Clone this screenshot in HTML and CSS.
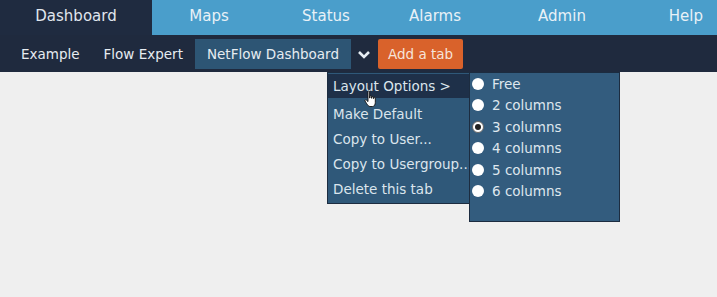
FILE: index.html
```html
<!DOCTYPE html>
<html>
<head>
<meta charset="utf-8">
<link rel="stylesheet" href="styles.css">
</head>
<body>
<div class="topnav">
  <div class="tab active">Dashboard</div>
  <div class="tab">Maps</div>
  <div class="tab">Status</div>
  <div class="tab">Alarms</div>
  <div class="tab">Admin</div>
  <div class="tab help">Help</div>
</div>
<div class="subnav">
  <div class="sub">Example</div>
  <div class="sub">Flow Expert</div>
  <div class="sub current">NetFlow Dashboard</div>
  <div class="chev"><svg width="14" height="10" viewBox="0 0 14 10"><path d="M2 2 L7 7 L12 2" fill="none" stroke="#e6edf3" stroke-width="2.6"/></svg></div>
  <div class="addtab">Add a tab</div>
</div>
<div class="content">
  <div class="menu">
    <div class="item hover">Layout Options &gt;</div>
    <div class="item">Make Default</div>
    <div class="item">Copy to User...</div>
    <div class="item">Copy to Usergroup...</div>
    <div class="item">Delete this tab</div>
    <svg class="cursor" width="14" height="18" viewBox="0 0 14 18"><path d="M4 1.5 C4 0.8 5.6 0.8 5.6 1.5 L5.6 8 L6 8 L6 6.3 C6 5.6 7.5 5.6 7.5 6.3 L7.5 8.2 L7.9 8.2 L7.9 7 C7.9 6.3 9.4 6.3 9.4 7 L9.4 8.6 L9.8 8.6 L9.8 7.8 C9.8 7.1 11.3 7.1 11.3 7.8 L11.3 12.5 C11.3 14.5 10.3 16.5 8.5 16.5 L6 16.5 C4.6 16.5 3.8 15.3 2.8 13.8 L1 11 C0.6 10.3 1.6 9.4 2.3 10 L4 11.6 Z" fill="#fff" stroke="#111" stroke-width="0.9"/></svg>
  </div>
  <div class="submenu">
    <label class="opt"><span class="radio"></span>Free</label>
    <label class="opt"><span class="radio"></span>2 columns</label>
    <label class="opt"><span class="radio checked"></span>3 columns</label>
    <label class="opt"><span class="radio"></span>4 columns</label>
    <label class="opt"><span class="radio"></span>5 columns</label>
    <label class="opt"><span class="radio"></span>6 columns</label>
  </div>
</div>
</body>
</html>
```
FILE: styles.css
```css
* { box-sizing: border-box; }
html, body { margin: 0; padding: 0; }
body {
  background: #efefef;
  font-family: "DejaVu Sans", Verdana, sans-serif;
  color: #e4ecf2;
  width: 717px;
  height: 297px;
  overflow: hidden;
}
.topnav {
  display: grid;
  grid-template-columns: 152px 114px 120px 98px 156px 1fr;
  height: 35px;
  background: #4a9ecb;
}
.tab {
  font-size: 15px;
  line-height: 33px;
  text-align: center;
  color: #e8f1f7;
}
.tab.active { background: #1f2b40; color: #e0e6ee; }
.tab.help { text-align: right; padding-right: 14px; }
.subnav {
  display: flex;
  align-items: center;
  height: 37px;
  background: #1f2a3e;
  padding-left: 9px;
}
.sub {
  font-size: 13.5px;
  padding: 0 12px;
  line-height: 30px;
  color: #e6ecf1;
}
.sub.current {
  background: #2d5574;
}
.chev {
  width: 27px;
  display: flex;
  justify-content: center;
  padding-top: 2px;
}
.addtab {
  background: #d9622b;
  color: #f6e4da;
  font-size: 13.5px;
  height: 30px;
  line-height: 30px;
  padding: 0 10px;
  border-radius: 2px;
}
.content {
  position: relative;
  height: 225px;
}
.menu {
  position: absolute;
  left: 327px;
  top: 0;
  width: 143px;
  height: 132px;
  background: #2f5879;
  border: 1px solid #1c2c40;
  padding-top: 1px;
}
.item {
  font-size: 13.5px;
  height: 25px;
  line-height: 24px;
  padding-left: 5px;
  white-space: nowrap;
  overflow: hidden;
  color: #dbe5ed;
}
.item.hover { background: #1e3049; height: 24px; line-height: 24px; margin-bottom: 4px; }
.cursor { position: absolute; left: 36px; top: 17px; }
.submenu {
  position: absolute;
  left: 469px;
  top: 0;
  width: 151px;
  height: 150px;
  background: #335c7e;
  border: 1px solid #1c2c40;
  padding-top: 0;
}
.opt {
  display: flex;
  align-items: center;
  height: 21.5px;
  font-size: 13.5px;
  color: #dfe7ee;
  padding-left: 2px;
}
.radio {
  width: 12px;
  height: 12px;
  border-radius: 50%;
  background: #fff;
  margin-right: 8px;
  position: relative;
}
.radio.checked { border: 1px solid #666; }
.radio.checked::after {
  content: "";
  position: absolute;
  left: 2px; top: 2px;
  width: 6px; height: 6px;
  border-radius: 50%;
  background: #222;
}
```
